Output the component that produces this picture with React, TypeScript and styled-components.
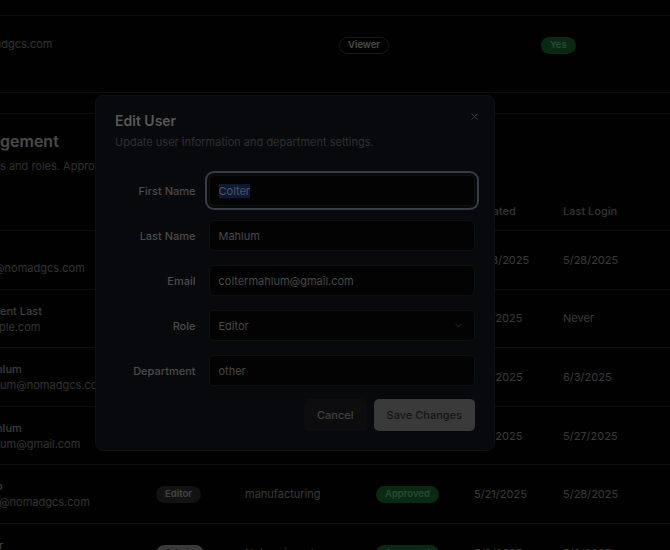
import React, { useEffect, useRef } from "react";
import styled, { createGlobalStyle, css } from "styled-components";
import { X, ChevronDown } from "lucide-react";

const Global = createGlobalStyle`
  html, body { margin: 0; padding: 0; background: #000; }
  body { font-family: Inter, "Noto Sans", sans-serif; }
  * { box-sizing: border-box; }
`;

/* ---------- background page (dimmed by the overlay) ---------- */

const Page = styled.div`
  position: relative;
  width: 670px;
  height: 550px;
  overflow: hidden;
  background: #060606;
  color: #c4c4c4;
  font-size: 11px;
  line-height: 16px;
`;

const PrevTable = styled.div`
  display: flex;
  flex-direction: column;
  border-bottom: 1px solid #333;
`;

const PrevRowStub = styled.div`
  height: 16px;
  border-bottom: 1px solid #333;
`;

const PrevRow = styled.div`
  display: grid;
  grid-template-columns: 339px 202px 1fr;
  align-items: start;
  height: 76px;
  padding-top: 20px;
`;

const Card = styled.section`
  margin-top: 20px;
  border-top: 1px solid #303030;
  display: flex;
  flex-direction: column;
`;

const CardHeader = styled.div`
  display: flex;
  flex-direction: column;
  gap: 7px;
  padding-top: 17px;
  padding-bottom: 18px;
`;

const CardTitle = styled.h2`
  margin: 0;
  font-size: 16px;
  line-height: 20px;
  font-weight: 600;
  color: #f2f2f2;
  white-space: nowrap;
`;

const CardDesc = styled.p`
  margin: 0;
  font-size: 11px;
  line-height: 16px;
  color: #9c9c9c;
  white-space: nowrap;
`;

const cols = css`
  display: grid;
  grid-template-columns: 156px 89px 131px 98px 89px 1fr;
`;

const HeadRow = styled.div`
  ${cols};
  height: 39px;
  align-items: center;
  border-bottom: 1px solid #363636;
`;

const HeadCell = styled.div`
  color: #adadad;
  font-weight: 500;
  white-space: nowrap;
  overflow: hidden;
`;

const BodyRow = styled.div`
  ${cols};
  height: 58.6px;
  align-items: center;
  border-bottom: 1px solid #363636;
`;

const UserCell = styled.div`
  align-self: start;
  padding-top: 13px;
  display: flex;
  flex-direction: column;
  overflow: hidden;
`;

const Frag = styled.span<{ $shift?: number }>`
  display: block;
  height: 16px;
  white-space: nowrap;
  margin-left: ${(p) => p.$shift ?? 0}px;
`;

const NameText = styled(Frag)`
  font-weight: 500;
  color: #c6c6c6;
`;

const EmailText = styled(Frag)`
  color: #a6a6a6;
`;

const Cell = styled.div`
  white-space: nowrap;
  color: #bdbdbd;
`;

type Tone = "outline" | "dark" | "light" | "green";

const Badge = styled.span<{ $tone: Tone }>`
  display: inline-flex;
  align-items: center;
  height: 17px;
  padding: 0 8px;
  border-radius: 999px;
  font-size: 9.5px;
  font-weight: 600;
  border: 1px solid transparent;
  white-space: nowrap;
  ${(p) =>
    p.$tone === "outline" &&
    css`
      border-color: #4e4e4e;
      color: #f2f2f2;
    `}
  ${(p) =>
    p.$tone === "dark" &&
    css`
      background: #3c3c3c;
      color: #e3e3e3;
    `}
  ${(p) =>
    p.$tone === "light" &&
    css`
      background: #c1c1c1;
      color: #3a3a3a;
    `}
  ${(p) =>
    p.$tone === "green" &&
    css`
      background: #248a40;
      color: #8cf5ad;
    `}
`;

const Overlay = styled.div`
  position: absolute;
  inset: 0;
  background: rgba(0, 0, 0, 0.7);
`;

/* ---------- dialog ---------- */

const Dialog = styled.div`
  position: absolute;
  left: 95px;
  top: 95px;
  width: 400px;
  padding: 18px 19px 19px 19px;
  background: #08090c;
  border: 1px solid #0f1013;
  border-radius: 8px;
  display: flex;
  flex-direction: column;
  font-size: 11px;
`;

const CloseButton = styled.button`
  position: absolute;
  top: 14px;
  right: 14px;
  width: 12px;
  height: 12px;
  padding: 0;
  border: 0;
  background: transparent;
  color: #474747;
  display: flex;
  align-items: center;
  justify-content: center;
`;

const DialogHeader = styled.div`
  display: flex;
  flex-direction: column;
  gap: 6px;
`;

const DialogTitle = styled.h2`
  margin: 0;
  font-size: 14px;
  line-height: 14px;
  font-weight: 600;
  color: #585858;
`;

const DialogDesc = styled.p`
  margin: 0;
  font-size: 11px;
  line-height: 16px;
  color: #2f3034;
`;

const Form = styled.form`
  margin-top: 25px;
  display: flex;
  flex-direction: column;
`;

const Fields = styled.div`
  display: grid;
  grid-template-columns: 80.5px 1fr;
  column-gap: 13px;
  row-gap: 14px;
  align-items: center;
`;

const Label = styled.label`
  text-align: right;
  font-weight: 500;
  color: #4c4c4c;
  white-space: nowrap;
`;

const fieldBox = css`
  height: 31px;
  width: 100%;
  padding: 0 10px 0 9px;
  background: #030303;
  border: 1px solid #0f1012;
  border-radius: 5px;
  font-family: inherit;
  font-size: 11px;
  color: #484848;
`;

const Input = styled.input`
  ${fieldBox};
  outline: none;
  &:focus {
    box-shadow: 0 0 0 2px #08090c, 0 0 0 4px #373c47;
  }
  &::selection {
    background: #0d1a33;
    color: #4f5563;
  }
`;

const SelectTrigger = styled.button`
  ${fieldBox};
  display: flex;
  align-items: center;
  justify-content: space-between;
  text-align: left;
  color: #484848;
  svg {
    color: #3c3c3c;
  }
`;

const Footer = styled.div`
  margin-top: 13px;
  display: flex;
  justify-content: flex-end;
  gap: 7px;
`;

const Button = styled.button<{ $primary?: boolean }>`
  height: 32px;
  padding: 0 13px;
  border-radius: 5px;
  border: 0;
  font-family: inherit;
  font-size: 11px;
  font-weight: 500;
  background: ${(p) => (p.$primary ? "#3a3a3a" : "#0d0d0f")};
  color: ${(p) => (p.$primary ? "#141414" : "#414141")};
`;

type Row = {
  name: string;
  nameShift: number;
  email: string;
  emailShift: number;
  role: string;
  roleTone: Tone;
  dept: string;
  created: string;
  last: string;
};

const rows: Row[] = [
  { name: "Admin", nameShift: -60, email: "@nomadgcs.com", emailShift: -6, role: "Admin", roleTone: "light", dept: "engineering", created: "5/28/2025", last: "5/28/2025" },
  { name: "ent Last", nameShift: 0, email: "ple.com", emailShift: -1, role: "Viewer", roleTone: "outline", dept: "Not assigned", created: "5/3/2025", last: "Never" },
  { name: "hlum", nameShift: -4, email: "um@nomadgcs.com", emailShift: 0, role: "Admin", roleTone: "light", dept: "engineering", created: "6/3/2025", last: "6/3/2025" },
  { name: "hlum", nameShift: -4, email: "um@gmail.com", emailShift: 0, role: "Editor", roleTone: "dark", dept: "other", created: "5/2/2025", last: "5/27/2025" },
  { name: "o", nameShift: -4, email: "@nomadgcs.com", emailShift: -1, role: "Editor", roleTone: "dark", dept: "manufacturing", created: "5/21/2025", last: "5/28/2025" },
  { name: "r", nameShift: -1, email: "@nomadgcs.com", emailShift: 0, role: "Admin", roleTone: "light", dept: "Not assigned", created: "5/9/2025", last: "5/9/2025" },
];

export default function App() {
  const firstRef = useRef<HTMLInputElement>(null);
  useEffect(() => {
    const el = firstRef.current;
    if (el) {
      el.focus();
      el.select();
    }
  }, []);

  return (
    <>
      <Global />
      <Page>
        <PrevTable>
          <PrevRowStub />
          <PrevRow>
            <EmailText $shift={-5}>adgcs.com</EmailText>
            <div>
              <Badge $tone="outline">Viewer</Badge>
            </div>
            <div>
              <Badge $tone="green">Yes</Badge>
            </div>
          </PrevRow>
        </PrevTable>

        <Card>
          <CardHeader>
            <CardTitle>gement</CardTitle>
            <CardDesc>s and roles. Approve or reject pending registrations.</CardDesc>
          </CardHeader>
          <HeadRow>
            <HeadCell>
              <Frag $shift={-60}>User</Frag>
            </HeadCell>
            <HeadCell>Role</HeadCell>
            <HeadCell>Department</HeadCell>
            <HeadCell>Status</HeadCell>
            <HeadCell>Created</HeadCell>
            <HeadCell>Last Login</HeadCell>
          </HeadRow>
          {rows.map((r, i) => (
            <BodyRow key={i}>
              <UserCell>
                <NameText $shift={r.nameShift}>{r.name}</NameText>
                <EmailText $shift={r.emailShift}>{r.email}</EmailText>
              </UserCell>
              <div>
                <Badge $tone={r.roleTone}>{r.role}</Badge>
              </div>
              <Cell>{r.dept}</Cell>
              <div>
                <Badge $tone="green">Approved</Badge>
              </div>
              <Cell>{r.created}</Cell>
              <Cell>{r.last}</Cell>
            </BodyRow>
          ))}
        </Card>

        <Overlay />

        <Dialog role="dialog" aria-labelledby="edit-user-title">
          <CloseButton type="button" aria-label="Close">
            <X size={11} strokeWidth={1.6} />
          </CloseButton>
          <DialogHeader>
            <DialogTitle id="edit-user-title">Edit User</DialogTitle>
            <DialogDesc>Update user information and department settings.</DialogDesc>
          </DialogHeader>
          <Form onSubmit={(e) => e.preventDefault()}>
            <Fields>
              <Label htmlFor="first">First Name</Label>
              <Input id="first" ref={firstRef} defaultValue="Colter" />
              <Label htmlFor="last">Last Name</Label>
              <Input id="last" defaultValue="Mahlum" />
              <Label htmlFor="email">Email</Label>
              <Input id="email" defaultValue="coltermahlum@gmail.com" />
              <Label>Role</Label>
              <SelectTrigger type="button">
                <span>Editor</span>
                <ChevronDown size={11} strokeWidth={1.6} />
              </SelectTrigger>
              <Label htmlFor="dept">Department</Label>
              <Input id="dept" defaultValue="other" />
            </Fields>
            <Footer>
              <Button type="button">Cancel</Button>
              <Button type="submit" $primary>
                Save Changes
              </Button>
            </Footer>
          </Form>
        </Dialog>
      </Page>
    </>
  );
}
